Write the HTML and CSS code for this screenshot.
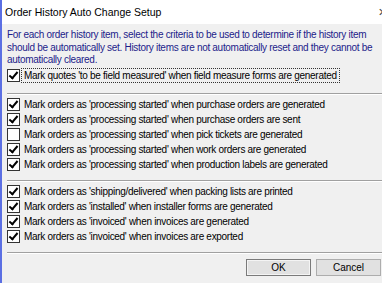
FILE: index.html
```html
<!DOCTYPE html>
<html lang="en">

<head>
    <meta charset="UTF-8">
    <title>Order History Auto Change Setup</title>
    <link rel="stylesheet" href="styles.css">
</head>

<body>
    <div class="dialog">
        <div class="titlebar">
            <span class="title">Order History Auto Change Setup</span>
            <span class="close">&#x2715;</span>
        </div>
        <div class="content">
            <p class="intro">For each order history item, select the criteria to be used to determine if the history item<br>should be automatically set. History items are not automatically reset and they cannot be<br>automatically cleared.</p>

            <div class="group">
                <label class="row"><span class="box checked"></span><span class="text focus">Mark quotes 'to be field measured' when field measure forms are generated</span></label>
            </div>
            <div class="sep wide"></div>

            <div class="group">
                <label class="row"><span class="box checked"></span><span class="text">Mark orders as 'processing started' when purchase orders are generated</span></label>
                <label class="row"><span class="box checked"></span><span class="text">Mark orders as 'processing started' when purchase orders are sent</span></label>
                <label class="row"><span class="box"></span><span class="text">Mark orders as 'processing started' when pick tickets are generated</span></label>
                <label class="row"><span class="box checked"></span><span class="text">Mark orders as 'processing started' when work orders are generated</span></label>
                <label class="row"><span class="box checked"></span><span class="text">Mark orders as 'processing started' when production labels are generated</span></label>
            </div>
            <div class="sep"></div>

            <div class="group">
                <label class="row"><span class="box checked"></span><span class="text">Mark orders as 'shipping/delivered' when packing lists are printed</span></label>
                <label class="row"><span class="box checked"></span><span class="text">Mark orders as 'installed' when installer forms are generated</span></label>
                <label class="row"><span class="box checked"></span><span class="text">Mark orders as 'invoiced' when invoices are generated</span></label>
                <label class="row"><span class="box checked"></span><span class="text">Mark orders as 'invoiced' when invoices are exported</span></label>
            </div>
            <div class="sep"></div>

            <div class="buttons">
                <button class="btn default">OK</button>
                <button class="btn">Cancel</button>
            </div>
        </div>
    </div>
</body>

</html>
```

FILE: styles.css
```css
* {
    margin: 0;
    padding: 0;
    box-sizing: border-box;
}

body {
    width: 382px;
    height: 283px;
    overflow: hidden;
    background: #f0f0f0;
    font-family: 'Liberation Sans', Arial, sans-serif;
    font-size: 10px;
    letter-spacing: -0.3px;
    color: #000;
}

.dialog {
    height: 283px;
    border-left: 2px solid #5b6fe3;
    background: #f0f0f0;
}

.titlebar {
    height: 24px;
    display: flex;
    align-items: center;
    justify-content: space-between;
    background: #fff;
    padding-left: 3px;
}

.title {
    font-size: 10.5px;
    letter-spacing: 0;
    color: #000;
}

.close {
    font-size: 11px;
    color: #444;
    margin-right: -5px;
}

.content {
    padding: 5px 0 0 5px;
}

.intro {
    color: #1c1c8a;
    line-height: 12.5px;
    margin-bottom: 1px;
    white-space: nowrap;
}

.group {
    display: flex;
    flex-direction: column;
}

.row {
    display: flex;
    align-items: center;
    height: 15px;
    white-space: nowrap;
}

.box {
    width: 13px;
    height: 13px;
    margin-right: 1px;
    border: 1px solid #333;
    background: #fff;
    position: relative;
}

.box.checked::after {
    content: "";
    position: absolute;
    left: 3px;
    top: 0px;
    width: 3px;
    height: 7px;
    border: solid #000;
    border-width: 0 2px 2px 0;
    transform: rotate(40deg);
}

.text {
    padding: 1px 2px;
    border: 1px solid transparent;
}

.text.focus {
    border: 1px dotted #333;
}

.sep {
    height: 2px;
    margin: 8px 0 2px 0;
    border-top: 1px solid #a0a0a0;
    border-bottom: 1px solid #fff;
}

.sep.wide {
    margin-top: 10px;
}

.buttons {
    display: flex;
    justify-content: flex-end;
    gap: 5px;
    margin-top: 5px;
    padding-right: 1px;
}

.btn {
    width: 65px;
    height: 17px;
    font-family: 'Liberation Sans', Arial, sans-serif;
    font-size: 10px;
    background: #e1e1e1;
    border: 1px solid #adadad;
    color: #000;
}

.btn.default {
    border: 1px solid #7a7a7a;
    box-shadow: inset 0 0 0 1px #f4f4f4;
}
```
